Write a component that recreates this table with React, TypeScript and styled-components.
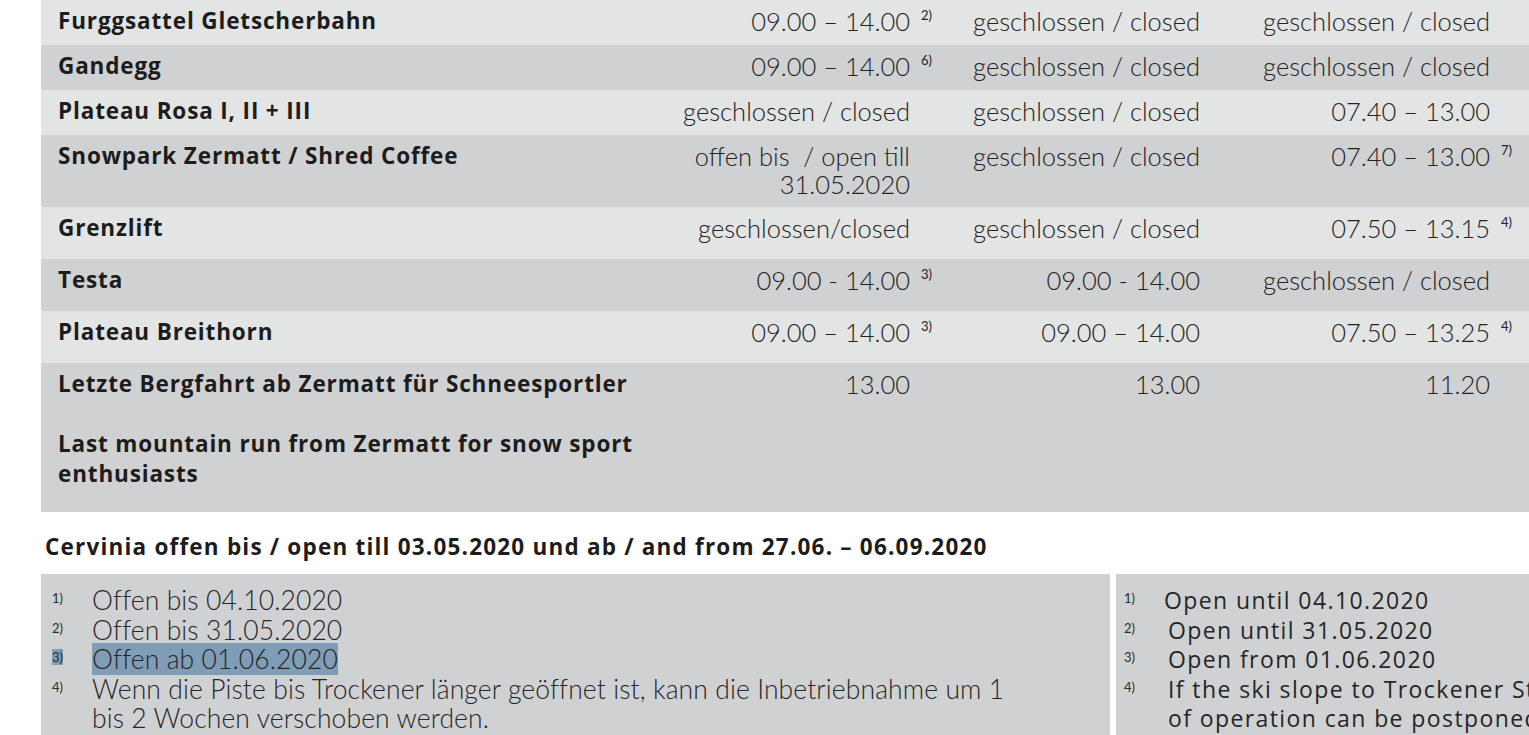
import React from 'react';
import styled, { createGlobalStyle } from 'styled-components';

const GlobalStyle = createGlobalStyle`
  html, body {
    margin: 0;
    padding: 0;
    background: #ffffff;
    overflow: hidden;
  }
`;

const LIGHT = '#e3e4e4';
const DARK = '#d0d1d3';
const NAME_FONT = `'Open Sans', 'Liberation Sans', sans-serif`;
const TIME_FONT = `'Lato', 'Liberation Sans', sans-serif`;

interface RowData {
  name: React.ReactNode;
  cols: [React.ReactNode, React.ReactNode, React.ReactNode];
  notes?: [string?, string?, string?];
  height: number;
}

const rows: RowData[] = [
  { name: 'Furggsattel Gletscherbahn', cols: ['09.00 – 14.00', 'geschlossen / closed', 'geschlossen / closed'], notes: ['2)'], height: 45 },
  { name: 'Gandegg', cols: ['09.00 – 14.00', 'geschlossen / closed', 'geschlossen / closed'], notes: ['6)'], height: 45 },
  { name: 'Plateau Rosa I, II + III', cols: ['geschlossen / closed', 'geschlossen / closed', '07.40 – 13.00'], height: 45 },
  {
    name: 'Snowpark Zermatt / Shred Coffee',
    cols: [
      <>
        offen bis&nbsp; / open till
        <br />
        31.05.2020
      </>,
      'geschlossen / closed',
      '07.40 – 13.00',
    ],
    notes: [undefined, undefined, '7)'],
    height: 72,
  },
  { name: 'Grenzlift', cols: ['geschlossen/closed', 'geschlossen / closed', '07.50 – 13.15'], notes: [undefined, undefined, '4)'], height: 52 },
  { name: 'Testa', cols: ['09.00 - 14.00', '09.00 - 14.00', 'geschlossen / closed'], notes: ['3)'], height: 52 },
  { name: 'Plateau Breithorn', cols: ['09.00 – 14.00', '09.00 – 14.00', '07.50 – 13.25'], notes: ['3)', undefined, '4)'], height: 52 },
  {
    name: (
      <>
        Letzte Bergfahrt ab Zermatt für Schneesportler
        <br />
        <br />
        Last mountain run from Zermatt for snow sport
        <br />
        enthusiasts
      </>
    ),
    cols: ['13.00', '13.00', '11.20'],
    height: 149,
  },
];

const notesDe: React.ReactNode[] = [
  'Offen bis 04.10.2020',
  'Offen bis 31.05.2020',
  'Offen ab 01.06.2020',
  <>
    Wenn die Piste bis Trockener länger geöffnet ist, kann die Inbetriebnahme um 1
    <br />
    bis 2 Wochen verschoben werden.
  </>,
];

const notesEn: React.ReactNode[] = [
  'Open until 04.10.2020',
  'Open until 31.05.2020',
  'Open from 01.06.2020',
  <>
    If the ski slope to Trockener St
    <br />
    of operation can be postponed
  </>,
];

export default function App() {
  return (
    <>
      <GlobalStyle />
      <Page>
        <Table>
          {rows.map((row, i) => (
            <Row key={i} $dark={i % 2 === 1} $h={row.height}>
              <NameCell>{row.name}</NameCell>
              {row.cols.map((c, j) => (
                <TimeCell key={j}>
                  {c}
                  {row.notes?.[j] && <Sup>{row.notes[j]}</Sup>}
                </TimeCell>
              ))}
              <div />
            </Row>
          ))}
        </Table>

        <Heading>Cervinia offen bis / open till 03.05.2020 und ab / and from 27.06. – 06.09.2020</Heading>

        <NotesRow>
          <NoteBox>
            {notesDe.map((n, i) => (
              <NoteLine key={i}>
                <NoteMark>{i === 2 ? <Mark>{`${i + 1})`}</Mark> : `${i + 1})`}</NoteMark>
                <NoteText>{i === 2 ? <Mark>{n}</Mark> : n}</NoteText>
              </NoteLine>
            ))}
          </NoteBox>
          <NoteBox $en>
            {notesEn.map((n, i) => (
              <NoteLine key={i}>
                <NoteMark>{`${i + 1})`}</NoteMark>
                <NoteText $en $shift={i > 0}>
                  {n}
                </NoteText>
              </NoteLine>
            ))}
          </NoteBox>
        </NotesRow>
      </Page>
    </>
  );
}

const Page = styled.div`
  padding-left: 41px;
  width: 1488px;
  overflow: hidden;
`;

const Table = styled.div`
  display: flex;
  flex-direction: column;
`;

const Row = styled.div<{ $dark: boolean; $h: number }>`
  display: grid;
  grid-template-columns: 609px 290px 290px 290px 1fr;
  align-items: start;
  min-height: ${(p) => p.$h}px;
  box-sizing: border-box;
  padding-top: 6px;
  background: ${(p) => (p.$dark ? DARK : LIGHT)};
`;

const NameCell = styled.div`
  padding-left: 17px;
  font-family: ${NAME_FONT};
  font-weight: 700;
  font-size: 22.5px;
  letter-spacing: 0.85px;
  line-height: 30px;
  color: #1c1c1c;
  white-space: nowrap;
`;

const TimeCell = styled.div`
  padding-right: 30px;
  text-align: right;
  font-family: ${TIME_FONT};
  font-weight: 300;
  font-size: 25.5px;
  line-height: 28px;
  padding-top: 1px;
  color: #222222;
  white-space: nowrap;
`;

const Sup = styled.span`
  display: inline-block;
  width: 0;
  white-space: nowrap;
  text-indent: 11px;
  vertical-align: top;
  font-size: 13px;
  line-height: 16px;
  font-weight: 400;
  color: #222222;
`;

const Heading = styled.h2`
  margin: 20px 0 12px 4px;
  font-family: ${NAME_FONT};
  font-weight: 700;
  font-size: 22.5px;
  letter-spacing: 1.2px;
  line-height: 30px;
  color: #1c1c1c;
  white-space: nowrap;
`;

const NotesRow = styled.div`
  display: grid;
  grid-template-columns: 1069px 1fr;
  column-gap: 6px;
`;

const NoteBox = styled.div<{ $en?: boolean }>`
  background: ${DARK};
  padding: 12px 0 0 ${(p) => (p.$en ? 8 : 11)}px;
  height: 200px;
  overflow: hidden;
`;

const NoteLine = styled.div`
  display: grid;
  grid-template-columns: 40px 1fr;
  align-items: start;
  line-height: 29.5px;
`;

const NoteMark = styled.span`
  font-family: ${TIME_FONT};
  font-size: 13px;
  line-height: 22px;
  color: #2e2e2e;
  padding-top: 1px;
`;

const NoteText = styled.span<{ $en?: boolean; $shift?: boolean }>`
  font-family: ${(p) => (p.$en ? `'Open Sans', 'Liberation Sans', sans-serif` : TIME_FONT)};
  font-weight: ${(p) => (p.$en ? 400 : 300)};
  font-size: ${(p) => (p.$en ? 23 : 26.5)}px;
  letter-spacing: ${(p) => (p.$en ? 1.4 : 0.1)}px;
  color: #262626;
  white-space: nowrap;
  padding-left: ${(p) => (p.$shift ? 4 : 0)}px;
`;

const Mark = styled.span`
  background: #7f9db6;
`;
